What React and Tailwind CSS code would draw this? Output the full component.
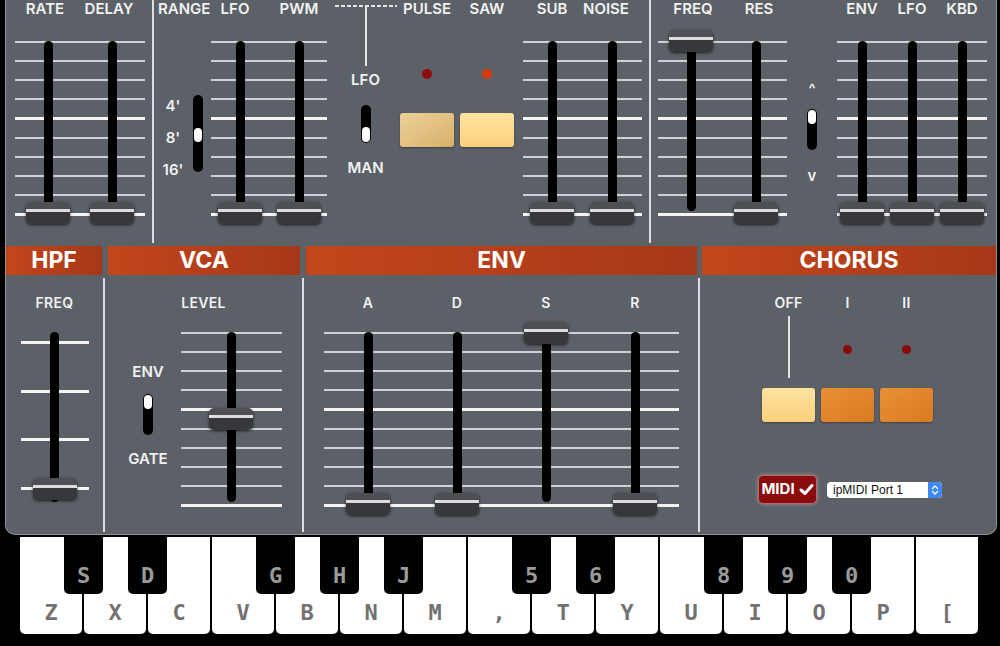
import React from "react";

function Knob() {
  return (
    <div className="w-[44px] h-[22px] rounded-[5px] overflow-hidden flex flex-col shadow-[0_1px_3px_rgba(0,0,0,0.7)]">
      <div className="h-[7px] bg-[#4d4f54]" />
      <div className="h-[3px] bg-[#dcdcdc]" />
      <div className="flex-1 bg-[#36383c]" />
    </div>
  );
}

function Col({ top, track }) {
  return (
    <div className="relative w-[44px] h-full flex justify-center shrink-0">
      <div className="w-[9px] bg-black rounded-full" style={{ height: track }} />
      <div className="absolute left-0" style={{ top }}>
        <Knob />
      </div>
    </div>
  );
}

function Lines({ count = 10, thick = [4, 9], className = "absolute inset-0", allThick = false }) {
  return (
    <div className={"flex flex-col justify-between " + className}>
      {Array.from({ length: count }).map((_, i) => (
        <div
          key={i}
          className={allThick || thick.includes(i) ? "h-[3px] bg-[#f4f4f4]" : "h-[2px] bg-[#cfd1d4]"}
        />
      ))}
    </div>
  );
}

function Bank({ className = "", colsClass = "", tops, track = 170, lines }) {
  return (
    <div className={"relative h-[175px] shrink-0 " + className}>
      {lines || <Lines />}
      <div className={"relative flex h-full " + colsClass}>
        {tops.map((t, i) => (
          <Col key={i} top={t} track={track} />
        ))}
      </div>
    </div>
  );
}

function Labels({ className = "", items, small = false }) {
  return (
    <div className={"flex h-[18px] shrink-0 " + className}>
      {items.map((t) => (
        <div
          key={t}
          className={
            "w-[44px] shrink-0 flex justify-center whitespace-nowrap font-semibold text-[#f2f2f2] leading-[18px] " +
            (small ? "text-[14px] tracking-[0.3px]" : "text-[15px]")
          }
        >
          {t}
        </div>
      ))}
    </div>
  );
}

function Pill({ className = "", knobClass = "" }) {
  return (
    <div className={"w-[10px] bg-black rounded-full p-[1px] flex flex-col shrink-0 " + className}>
      <div className={"w-full h-[13px] bg-white rounded-full " + knobClass} />
    </div>
  );
}

function Txt({ children, className = "" }) {
  return (
    <div className={"h-[18px] leading-[18px] text-[15px] font-semibold text-[#f2f2f2] whitespace-nowrap " + className}>
      {children}
    </div>
  );
}

function Header({ children, className = "" }) {
  return (
    <div
      className={
        "h-full flex items-center justify-center bg-linear-to-r from-[#c4461b] to-[#a53819] text-white font-bold text-[23px] " +
        className
      }
    >
      {children}
    </div>
  );
}

const VDiv = () => <div className="w-[2px] shrink-0 bg-[#dcdde0]" />;
const BDiv = () => <div className="w-[2px] shrink-0 bg-[#dcdde0] my-[1px]" />;

const whiteKeys = ["Z", "X", "C", "V", "B", "N", "M", ",", "T", "Y", "U", "I", "O", "P", "["];
const blackKeys = [
  [1, "S"],
  [2, "D"],
  [4, "G"],
  [5, "H"],
  [6, "J"],
  [8, "5"],
  [9, "6"],
  [11, "8"],
  [12, "9"],
  [13, "0"],
];

export default function App() {
  return (
    <div className="w-[1000px] h-[646px] bg-black overflow-hidden font-['Inter',sans-serif]">
      {/* Panel */}
      <div className="ml-[5px] w-[992px] h-[535px] bg-[#5c6067] border border-t-0 border-[#8d9095] rounded-b-[10px] flex flex-col">
        {/* Top section */}
        <div className="flex h-[243px] shrink-0">
          {/* LFO */}
          <div className="w-[146px] flex flex-col shrink-0">
            <Labels className="ml-[9px] pl-[8px] gap-[20px]" items={["RATE", "DELAY"]} />
            <Bank className="mt-[23px] ml-[9px] w-[130px]" colsClass="pl-[11px] gap-[20px]" tops={[161, 161]} />
          </div>
          <VDiv />
          {/* DCO */}
          <div className="w-[495px] flex shrink-0">
            {/* Range */}
            <div className="w-[57px] flex flex-col shrink-0">
              <Txt className="pl-[4px]">RANGE</Txt>
              <div className="flex mt-[77px]">
                <div className="w-[24px] ml-[7px] flex flex-col items-center gap-[15px] pt-[1.5px]">
                  <div className="h-[17px] leading-[17px] text-[15px] font-semibold text-[#f2f2f2]">4'</div>
                  <div className="h-[17px] leading-[17px] text-[15px] font-semibold text-[#f2f2f2]">8'</div>
                  <div className="h-[17px] leading-[17px] text-[15px] font-semibold text-[#f2f2f2]">16'</div>
                </div>
                <Pill className="ml-[8px] h-[77px]" knobClass="mt-[32px] h-[14px]" />
              </div>
            </div>
            {/* LFO / PWM */}
            <div className="w-[116px] flex flex-col shrink-0">
              <Labels className="pl-[2px] gap-[20px]" items={["LFO", "PWM"]} />
              <Bank className="mt-[23px] w-[116px]" colsClass="pl-[7px] gap-[15px]" tops={[161, 161]} />
            </div>
            {/* Mode switch */}
            <div className="ml-[4px] w-[69px] flex flex-col items-center shrink-0">
              <div className="mt-[5px] h-[2px] w-[62px] bg-[repeating-linear-gradient(90deg,#e4e4e4_0_4px,transparent_4px_6px)]" />
              <div className="w-[2px] h-[59px] bg-[#e4e4e4]" />
              <Txt className="mt-[5px]">LFO</Txt>
              <Pill className="mt-[16px] h-[38px]" knobClass="mt-auto h-[15px]" />
              <Txt className="mt-[16px]">MAN</Txt>
            </div>
            {/* Pulse / Saw */}
            <div className="flex gap-[6px] shrink-0">
              <div className="w-[54px] flex flex-col items-center">
                <Txt>PULSE</Txt>
                <div className="mt-[51px] w-[10px] h-[10px] rounded-full bg-[#8e0b0b]" />
                <div className="mt-[34px] w-[54px] h-[34px] rounded-[3px] bg-linear-to-br from-[#ecd198] to-[#d8b06b] shadow-[0_1px_2px_rgba(0,0,0,0.35)]" />
              </div>
              <div className="w-[54px] flex flex-col items-center">
                <Txt>SAW</Txt>
                <div className="mt-[51px] w-[10px] h-[10px] rounded-full bg-[#d93a0b]" />
                <div className="mt-[34px] w-[54px] h-[34px] rounded-[3px] bg-linear-to-b from-[#fee4a0] to-[#fcd17b] shadow-[0_1px_2px_rgba(0,0,0,0.35)]" />
              </div>
            </div>
            {/* Sub / Noise */}
            <div className="ml-[9px] w-[119px] flex flex-col shrink-0">
              <Labels className="pl-[7px] gap-[10px]" items={["SUB", "NOISE"]} />
              <Bank className="mt-[23px] w-[119px]" colsClass="pl-[7px] gap-[16px]" tops={[161, 161]} />
            </div>
          </div>
          <VDiv />
          {/* VCF */}
          <div className="flex-1 flex">
            <div className="ml-[7px] w-[129px] flex flex-col shrink-0">
              <Labels className="pl-[13px] gap-[22px]" items={["FREQ", "RES"]} />
              <Bank className="mt-[23px] w-[129px]" colsClass="pl-[11px] gap-[21px]" tops={[-11, 161]} />
            </div>
            <div className="w-[50px] flex flex-col items-center shrink-0">
              <Txt className="mt-[80px]">^</Txt>
              <Pill className="mt-[11px] h-[41px]" knobClass="h-[14px]" />
              <Txt className="mt-[17px]">v</Txt>
            </div>
            <div className="w-[150px] flex flex-col shrink-0">
              <Labels className="pl-[3px] gap-[6px]" items={["ENV", "LFO", "KBD"]} />
              <Bank className="mt-[23px] w-[150px]" colsClass="pl-[3px] gap-[6px]" tops={[161, 161, 161]} />
            </div>
          </div>
        </div>

        {/* Headers */}
        <div className="flex mt-[3px] h-[29px] shrink-0">
          <Header className="w-[96px]">HPF</Header>
          <Header className="ml-[6px] w-[192px]">VCA</Header>
          <Header className="ml-[6px] w-[391px]">ENV</Header>
          <Header className="ml-[5px] flex-1">CHORUS</Header>
        </div>

        {/* Bottom section */}
        <div className="flex mt-[2px] h-[256px] shrink-0">
          {/* HPF */}
          <div className="w-[97px] flex flex-col items-center shrink-0">
            <Labels className="mt-[17px]" items={["FREQ"]} small />
            <Bank
              className="mt-[20px] w-[68px]"
              colsClass="justify-center"
              tops={[146]}
              lines={<Lines count={4} allThick className="absolute left-0 right-0 top-[9px] h-[149px]" />}
            />
          </div>
          <BDiv />
          {/* VCA */}
          <div className="w-[197px] flex flex-col shrink-0">
            <div className="mt-[17px] flex justify-center">
              <Labels items={["LEVEL"]} small />
            </div>
            <div className="flex mt-[20px]">
              <div className="ml-[19px] w-[48px] flex flex-col items-center shrink-0">
                <Txt className="mt-[31px] text-[14px]">ENV</Txt>
                <Pill className="mt-[13px] h-[41px]" knobClass="h-[14px]" />
                <Txt className="mt-[15px] text-[14px]">GATE</Txt>
              </div>
              <Bank className="ml-[9px] w-[101px]" colsClass="pl-[28px]" tops={[76]} />
            </div>
          </div>
          <BDiv />
          {/* ENV */}
          <div className="w-[394px] flex flex-col shrink-0">
            <Labels className="mt-[17px] ml-[20px] pl-[22px] gap-[45px]" items={["A", "D", "S", "R"]} small />
            <Bank
              className="mt-[20px] ml-[20px] w-[355px]"
              colsClass="pl-[22px] gap-[45px]"
              tops={[161, 161, -10, 161]}
            />
          </div>
          <BDiv />
          {/* CHORUS */}
          <div className="flex-1 flex flex-col">
            <div className="mt-[17px] pl-[62px] flex gap-[6px]">
              <div className="w-[53px] flex flex-col items-center">
                <Labels items={["OFF"]} small />
                <div className="h-[76px] flex flex-col items-center">
                  <div className="mt-[4px] w-[2px] h-[62px] bg-[#e4e4e4]" />
                </div>
                <div className="w-[53px] h-[34px] rounded-[3px] bg-linear-to-b from-[#fee3a0] to-[#fbd07c] shadow-[0_1px_2px_rgba(0,0,0,0.35)]" />
              </div>
              <div className="w-[53px] flex flex-col items-center">
                <Labels items={["I"]} small />
                <div className="h-[76px] flex flex-col items-center">
                  <div className="mt-[33px] w-[9px] h-[9px] rounded-full bg-[#8a0a0a]" />
                </div>
                <div className="w-[53px] h-[34px] rounded-[3px] bg-linear-to-br from-[#e89035] to-[#db7a20] shadow-[0_1px_2px_rgba(0,0,0,0.35)]" />
              </div>
              <div className="w-[53px] flex flex-col items-center">
                <Labels items={["II"]} small />
                <div className="h-[76px] flex flex-col items-center">
                  <div className="mt-[33px] w-[9px] h-[9px] rounded-full bg-[#8a0a0a]" />
                </div>
                <div className="w-[53px] h-[34px] rounded-[3px] bg-linear-to-br from-[#e89035] to-[#db7a20] shadow-[0_1px_2px_rgba(0,0,0,0.35)]" />
              </div>
            </div>
            <div className="mt-[53px] pl-[58px] flex items-center">
              <div className="w-[59px] h-[29px] rounded-[5px] bg-[#8b0c0c] border border-[#b56a6a] shadow-[0_0_4px_rgba(255,210,210,0.45)] flex items-center justify-center gap-[4px] text-white font-bold text-[15px]">
                <span>MIDI</span>
                <svg width="15" height="13" viewBox="0 0 15 13">
                  <path d="M2 7 L6 10.5 L13 2.5" fill="none" stroke="white" strokeWidth="3" strokeLinecap="round" strokeLinejoin="round" />
                </svg>
              </div>
              <div className="ml-[10px] w-[115px] h-[16px] rounded-[4px] bg-white flex items-center overflow-hidden">
                <span className="flex-1 pl-[6px] text-[12px] leading-[16px] text-[#111] font-['Liberation_Sans',sans-serif]">
                  ipMIDI Port 1
                </span>
                <div className="w-[14px] h-full bg-[#3d8af7] rounded-r-[4px] flex items-center justify-center">
                  <svg width="8" height="12" viewBox="0 0 8 12">
                    <path d="M1.5 4.5 L4 2 L6.5 4.5 M1.5 7.5 L4 10 L6.5 7.5" fill="none" stroke="white" strokeWidth="1.3" strokeLinecap="round" strokeLinejoin="round" />
                  </svg>
                </div>
              </div>
            </div>
          </div>
        </div>
      </div>

      {/* Keyboard */}
      <div className="relative mt-[2px] h-[97px] flex pl-[20px] gap-[2px] font-['DejaVu_Sans_Mono',monospace]">
        {whiteKeys.map((k) => (
          <div
            key={k}
            className="w-[62px] h-full bg-white rounded-b-[5px] flex justify-center pt-[65px] text-[22px] leading-[21px] font-bold text-[#727272] shrink-0"
          >
            {k}
          </div>
        ))}
        {blackKeys.map(([i, k]) => (
          <div
            key={k}
            className="absolute top-0 w-[39px] h-[57px] bg-black rounded-b-[5px] flex justify-center pt-[28px] text-[22px] leading-[21px] font-bold text-[#9a9a9a]"
            style={{ left: 64 * i }}
          >
            {k}
          </div>
        ))}
      </div>
    </div>
  );
}
